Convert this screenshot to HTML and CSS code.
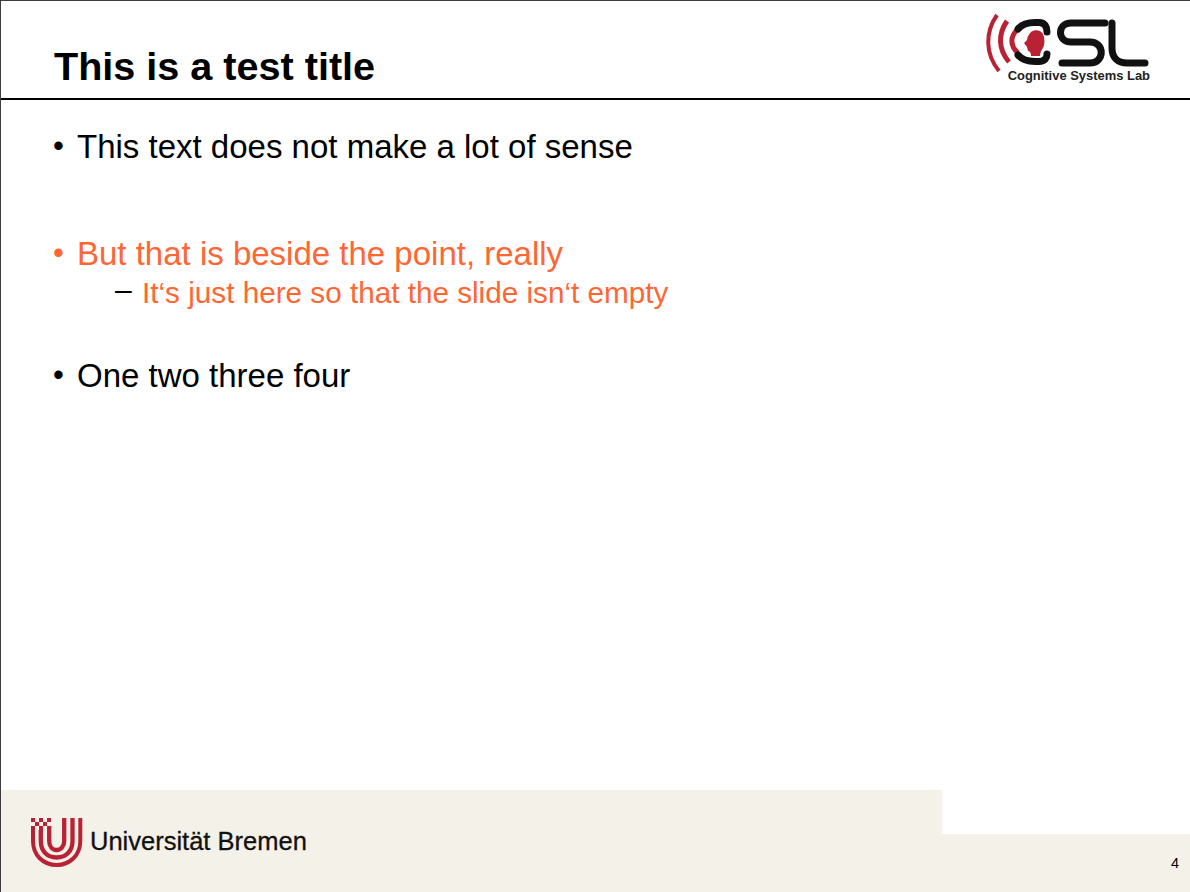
FILE: index.html
```html
<!DOCTYPE html>
<html lang="en">
<head>
<meta charset="UTF-8" />
<title>This is a test title</title>
<link rel="stylesheet" href="styles.css">
</head>
<body>
  <div class="slide">
    <header class="slide-head">
      <h1>This is a test title</h1>
      <div class="csl-logo">
        <svg class="csl-mark" width="166" height="64" viewBox="0 0 166 64" aria-hidden="true">
          <g fill="none" stroke="#b92234">
            <path d="M12 3 C0 20 0 42 14 59" stroke-width="4"/>
            <path d="M22 9 C13 22 13 37 24 50" stroke-width="5"/>
            <path d="M32 18 C25 25 25 34 33 41" stroke-width="5"/>
          </g>
          <path d="M46 20 C50 17 56 18 58 22 C60 27 60 32 58 36 C56 39 55 41 55 44 L46 44 C46 41 45 39 43 39 L42 35 L39 31 L42 28 C42 25 44 22 46 20 Z" fill="#b92234"/>
          <g fill="none" stroke="#111" stroke-width="7" stroke-linecap="round">
            <path d="M33 17 C37 12 43 10.500 50 10.500 L54 10.500 C60 10.500 62 15 62 20" />
            <path d="M33 43 C37 48 43 49.500 50 49.500 L54 49.500 C60 49.500 62 46 62 42" />
            <path d="M120 11 L86 11 C72 11 72 30 86 30 L105 30 C120 30 120 51 105 51 L77 51"/>
            <path d="M127 11 L127 36 C127 46 133 51 142 51 L160 51"/>
          </g>
        </svg>
        <span class="csl-name">Cognitive Systems Lab</span>
      </div>
    </header>

    <main class="slide-body">
      <ul class="points">
        <li class="point">This text does not make a lot of sense</li>
        <li class="point accent point-gap">But that is beside the point, really
          <ul class="subpoints">
            <li>It‘s just here so that the slide isn‘t empty</li>
          </ul>
        </li>
        <li class="point point-last">One two three four</li>
      </ul>
    </main>

    <footer class="slide-foot">
      <div class="foot-left">
        <svg class="ub-mark" width="52" height="50" viewBox="0 0 52 50" aria-hidden="true">
          <g fill="#b92234">
            <rect x="0" y="0" width="4" height="4"/><rect x="8" y="0" width="4" height="4"/><rect x="16" y="0" width="4" height="4"/>
            <rect x="4" y="4" width="4" height="4"/><rect x="12" y="4" width="4" height="4"/>
            <rect x="0" y="8" width="4" height="4"/><rect x="8" y="8" width="4" height="4"/>
          </g>
          <g fill="none" stroke="#b92234">
            <path d="M2 12 L2 23 C2 37 12 47 25.700 47 C39 47 49.300 37 49.300 23 L49.300 0" stroke-width="4"/>
            <path d="M9.800 12 L9.800 23 C9.800 33 16 39.500 25.700 39.500 C35 39.500 41.500 33 41.500 23 L41.500 0" stroke-width="4.300"/>
            <path d="M18.200 8 L18.200 23 C18.200 28 21 32 25.700 32 C30 32 33.200 28 33.200 23 L33.200 0" stroke-width="4.300"/>
          </g>
        </svg>
        <span class="ub-name">Universität Bremen</span>
      </div>
      <div class="foot-right">
        <span class="page-no">4</span>
      </div>
    </footer>
  </div>
</body>
</html>
```

FILE: styles.css
```css
* {
  box-sizing: border-box;
}

html, body {
  margin: 0;
  height: 100%;
  background: #fff;
}

body {
  font-family: "Liberation Sans", Arial, sans-serif;
  color: #000;
  overflow: hidden;
}

.slide {
  width: 1190px;
  height: 892px;
  border-top: 1px solid #3c3c3c;
  border-left: 1px solid #3c3c3c;
  display: flex;
  flex-direction: column;
}

/* Header */
.slide-head {
  height: 99px;
  border-bottom: 2px solid #000;
  padding: 0 39px 0 53px;
  display: flex;
  justify-content: space-between;
  flex-shrink: 0;
}

.slide-head h1 {
  margin: 44px 0 0;
  font-size: 39.600px;
  line-height: 43px;
  font-weight: 700;
}

.csl-logo {
  position: relative;
  width: 166px;
  padding-top: 11px;
}

.csl-mark {
  display: block;
}

.csl-name {
  position: absolute;
  right: 1px;
  top: 68px;
  font-size: 12.950px;
  line-height: 14px;
  font-weight: 700;
  color: #222;
  white-space: nowrap;
}

/* Body */
.slide-body {
  flex: 1;
  padding: 28px 0 0 53px;
}

.points,
.subpoints {
  list-style: none;
  margin: 0;
  padding: 0;
}

.point {
  position: relative;
  padding-left: 23px;
  font-size: 33px;
  line-height: 38px;
}

.point::before {
  content: "•";
  position: absolute;
  left: -1px;
  top: -1px;
  font-size: 31px;
}

.accent {
  color: #ff6633;
}

.point-gap {
  margin-top: 69px;
}

.point-last {
  margin-top: 48px;
}

.subpoints {
  margin-left: 42px;
}

.subpoints li {
  position: relative;
  padding-left: 23px;
  font-size: 29.700px;
  line-height: 32px;
  margin-top: 4px;
}

.subpoints li::before {
  content: "–";
  position: absolute;
  left: -4px;
  top: -3px;
  color: #000;
  font-size: 30px;
}

/* Footer */
.slide-foot {
  height: 102px;
  display: flex;
  flex-shrink: 0;
}

.foot-left {
  width: 941px;
  background: #f4f1e9;
  display: flex;
  align-items: center;
  gap: 7px;
  padding: 4px 0 0 30px;
}

.ub-name {
  font-size: 25.500px;
  line-height: 30px;
  color: #111;
  -webkit-text-stroke: 0.3px #111;
  margin-bottom: 4px;
}

.foot-right {
  flex: 1;
  display: flex;
  align-items: flex-end;
  justify-content: flex-end;
}

.page-no {
  width: 100%;
  height: 58px;
  background: #f4f1e9;
  text-align: right;
  padding: 21px 11px 0 0;
  font-size: 14.500px;
  line-height: 16px;
}
```
